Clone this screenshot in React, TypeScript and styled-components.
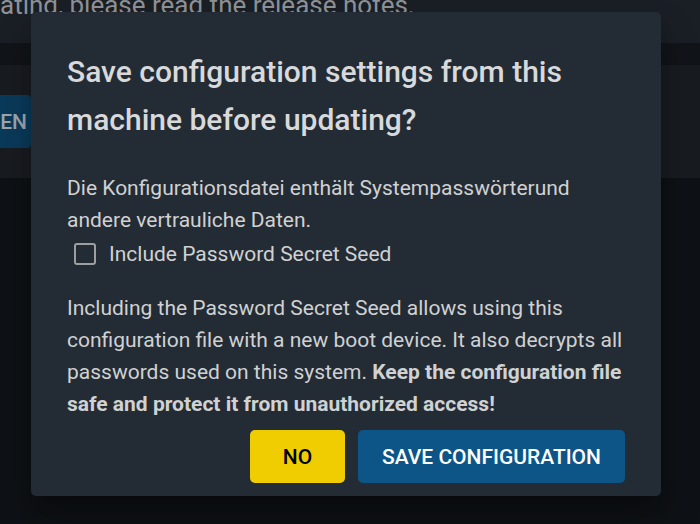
import React from "react";
import styled, { createGlobalStyle } from "styled-components";

const Global = createGlobalStyle`
  html, body { margin: 0; padding: 0; background: #0e1115; }
  body { font-family: Roboto, "Noto Sans", "Liberation Sans", sans-serif; }
  * { box-sizing: border-box; }
`;

const Page = styled.div`
  position: relative;
  width: 700px;
  height: 524px;
  overflow: hidden;
  background: #0e1115;
  display: flex;
  flex-direction: column;
`;

const NoticeBand = styled.div`
  height: 43px;
  background: #1a1e25;
`;

const NoticeClip = styled.div`
  height: 16px;
  overflow: hidden;
`;

const NoticeText = styled.div`
  font-size: 26px;
  line-height: 26px;
  margin-top: -8px;
  color: #8e9296;
  white-space: nowrap;
`;

const NoticeLink = styled.span`
  text-decoration: underline;
  text-decoration-color: #9aa0a6;
`;

const Strip = styled.div`
  height: 22px;
  background: #111418;
`;

const Toolbar = styled.div`
  height: 113px;
  background: #181b20;
  display: flex;
  align-items: center;
`;

const GhostButton = styled.div`
  height: 53px;
  width: 40px;
  margin-left: -9px;
  background: #0a3a5a;
  color: #9ea6ae;
  font-size: 21px;
  font-weight: 500;
  display: flex;
  align-items: center;
  justify-content: flex-end;
  padding-right: 4px;
  border-radius: 0 4px 4px 0;
`;

const Rest = styled.div`
  flex: 1;
  background: #0e1115;
`;

const Dialog = styled.div`
  position: absolute;
  left: 31px;
  top: 12px;
  width: 630px;
  height: 484px;
  padding: 36px 36px 12px;
  background: #232c35;
  border-radius: 5px;
  box-shadow: 0 11px 15px -7px rgba(0,0,0,.3), 0 24px 38px 3px rgba(0,0,0,.2);
  color: #d2d3d4;
`;

const Title = styled.h2`
  margin: 0;
  font-size: 30px;
  font-weight: 500;
  line-height: 48px;
  color: #d8d9da;
`;

const Text = styled.p<{ $gap: number }>`
  margin: ${(p) => p.$gap}px 0 0;
  font-size: 21px;
  line-height: 32px;
  color: #d0d1d2;
`;

const CheckRow = styled.label`
  display: flex;
  align-items: center;
  height: 36px;
  padding-left: 7px;
  font-size: 21px;
  color: #d0d1d2;
`;

const Box = styled.span`
  width: 22px;
  height: 22px;
  border: 2.5px solid #9c9ea0;
  border-radius: 3px;
  margin-right: 13px;
`;

const Actions = styled.div`
  margin-top: 10px;
  display: flex;
  justify-content: flex-end;
  gap: 13px;
`;

const Button = styled.button<{ $kind: "warn" | "primary" }>`
  height: 53px;
  min-width: 95px;
  padding: 0 24px;
  border: none;
  border-radius: 5px;
  font-family: Roboto, "Liberation Sans", sans-serif;
  font-size: 21px;
  font-weight: 500;
  text-transform: uppercase;
  background: ${(p) => (p.$kind === "warn" ? "#f0cd00" : "#0d5587")};
  color: ${(p) => (p.$kind === "warn" ? "#000" : "#fff")};
`;

export default function App() {
  return (
    <>
      <Global />
      <Page>
        <NoticeBand>
          <NoticeClip>
            <NoticeText>
              <NoticeLink>ating</NoticeLink>, please read the release notes.
            </NoticeText>
          </NoticeClip>
        </NoticeBand>
        <Strip />
        <Toolbar>
          <GhostButton>EN</GhostButton>
        </Toolbar>
        <Rest />
        <Dialog>
          <Title>Save configuration settings from this machine before updating?</Title>
          <Text $gap={28}>
            Die Konfigurationsdatei enthält Systempasswörterund andere vertrauliche Daten.
          </Text>
          <CheckRow>
            <Box />
            Include Password Secret Seed
          </CheckRow>
          <Text $gap={20}>
            Including the Password Secret Seed allows using this configuration file with a new boot
            device. It also decrypts all passwords used on this system.{" "}
            <b>Keep the configuration file safe and protect it from unauthorized access!</b>
          </Text>
          <Actions>
            <Button $kind="warn">No</Button>
            <Button $kind="primary">Save Configuration</Button>
          </Actions>
        </Dialog>
      </Page>
    </>
  );
}
